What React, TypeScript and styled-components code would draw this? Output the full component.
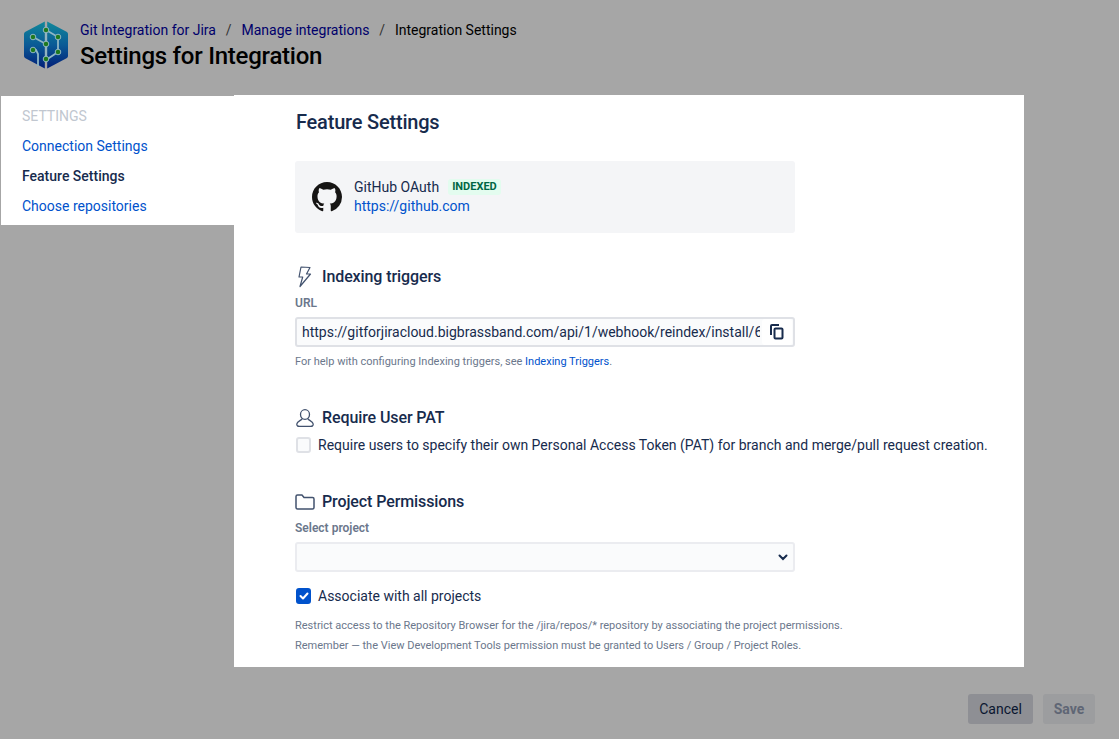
import React from "react";
import styled, { createGlobalStyle } from "styled-components";

const Global = createGlobalStyle`
  html, body { margin: 0; padding: 0; background: #a6a6a6; }
  body { font-family: Roboto, "Liberation Sans", sans-serif; font-size: 14px; color: #172b4d; }
  * { box-sizing: border-box; }
`;

const Page = styled.div`
  width: 1119px;
  height: 739px;
  overflow: hidden;
  display: flex;
  flex-direction: column;
  background: #a6a6a6;
`;
const Header = styled.header`
  height: 95px;
  display: flex;
  gap: 12px;
  padding: 20px 0 0 24px;
`;
const LogoWrap = styled.div`
  margin-top: 1px;
  width: 44px;
  height: 48px;
`;
const Titles = styled.div`
  display: flex;
  flex-direction: column;
`;
const Crumbs = styled.nav`
  display: flex;
  height: 20px;
  align-items: center;
  line-height: 20px;
  color: #000;
`;
const Crumb = styled.a<{ $current?: boolean }>`
  color: ${(p) => (p.$current ? "#000" : "#00006b")};
`;
const Sep = styled.span`
  width: 25.5px;
  text-align: center;
  color: #333;
`;
const PageTitle = styled.h1`
  margin: 0;
  font-size: 24px;
  line-height: 32px;
  font-weight: 500;
  letter-spacing: -0.24px;
  color: #000;
`;
const Body = styled.div`
  flex: 0 0 572px;
  display: flex;
  padding-left: 1px;
`;
const Sidebar = styled.aside`
  width: 233px;
  height: 129px;
  margin-top: 1px;
  background: #fff;
  padding: 5px 0 0 21px;
`;
const SideHeading = styled.div`
  height: 30px;
  line-height: 30px;
  color: #c1c7d0;
  font-size: 14px;
`;
const SideItem = styled.a<{ $active?: boolean }>`
  display: block;
  height: 30px;
  line-height: 30px;
  color: ${(p) => (p.$active ? "#172b4d" : "#0052cc")};
  font-weight: ${(p) => (p.$active ? 500 : 400)};
`;
const Main = styled.main`
  width: 790px;
  background: #fff;
  padding: 0 0 0 61px;
`;
const MainTitle = styled.h2`
  margin: 13px 0 0 1px;
  height: 28px;
  font-size: 20px;
  line-height: 28px;
  font-weight: 500;
  letter-spacing: -0.2px;
  color: #172b4d;
`;
const Card = styled.div`
  width: 500px;
  height: 72px;
  margin-top: 25px;
  background: #f4f5f7;
  border-radius: 3px;
  display: flex;
  align-items: center;
  gap: 12px;
  padding: 0 0 0 17px;
`;
const CardText = styled.div`
  display: flex;
  flex-direction: column;
  padding-bottom: 2px;
`;
const CardRow = styled.div`
  display: flex;
  align-items: center;
  gap: 9px;
  height: 20px;
  line-height: 20px;
`;
const Badge = styled.span`
  background: #e3fcef;
  color: #006644;
  font-size: 11px;
  font-weight: 700;
  line-height: 16px;
  height: 16px;
  padding: 0 4px;
  border-radius: 3px;
`;
const Link = styled.a`
  color: #0052cc;
  line-height: 20px;
  margin-top: -1px;
`;
const SectionHead = styled.div<{ $top: number }>`
  display: flex;
  align-items: center;
  margin-top: ${(p) => p.$top}px;
  height: 24px;
`;
const IconSlot = styled.span<{ $inset?: number }>`
  width: 27px;
  height: 24px;
  padding-left: ${(p) => p.$inset ?? 0}px;
  display: flex;
  align-items: center;
  flex: none;
`;
const SectionTitle = styled.h3`
  margin: 0;
  font-size: 16px;
  line-height: 24px;
  font-weight: 500;
  letter-spacing: -0.1px;
  color: #172b4d;
`;
const Label = styled.div`
  margin-top: 6px;
  height: 16px;
  font-size: 12px;
  line-height: 16px;
  font-weight: 600;
  color: #6b778c;
`;
const UrlField = styled.div`
  width: 500px;
  height: 30px;
  margin-top: 6px;
  background: #fafbfc;
  border: 2px solid #dfe1e6;
  border-radius: 3px;
  padding-left: 5px;
  line-height: 26px;
  color: #172b4d;
  display: flex;
  align-items: center;
`;
const UrlText = styled.span`
  width: 458px;
  overflow: hidden;
  white-space: nowrap;
`;
const CopyBtn = styled.span`
  margin-left: 2px;
  width: 30px;
  height: 26px;
  background: #fff;
  border-radius: 3px;
  display: flex;
  align-items: center;
  justify-content: center;
`;
const Help = styled.div<{ $top: number }>`
  margin-top: ${(p) => p.$top}px;
  font-size: 11px;
  line-height: 20px;
  height: 20px;
  color: #6b778c;
`;
const HelpLink = styled.a`
  color: #0052cc;
`;
const CheckRow = styled.label<{ $top: number }>`
  display: flex;
  align-items: center;
  gap: 7px;
  margin-top: ${(p) => p.$top}px;
  height: 20px;
  line-height: 20px;
  color: #172b4d;
  white-space: nowrap;
`;
const Box = styled.span<{ $on?: boolean }>`
  width: 15px;
  height: 16px;
  margin-left: 1px;
  flex: none;
  border-radius: 3px;
  background: ${(p) => (p.$on ? "#0052cc" : "#fafbfc")};
  border: 2px solid ${(p) => (p.$on ? "#0052cc" : "#dfe1e6")};
  display: flex;
  align-items: center;
  justify-content: center;
`;
const SelectBox = styled.div`
  width: 500px;
  height: 30px;
  margin-top: 6px;
  background: #fafbfc;
  border: 2px solid #ebecf0;
  border-radius: 3px;
  display: flex;
  align-items: center;
  justify-content: flex-end;
  padding-right: 2px;
`;
const Footer = styled.footer`
  flex: 1;
  display: flex;
  justify-content: flex-end;
  gap: 10px;
  padding: 27px 24px 0 0;
`;
const Button = styled.button<{ $disabled?: boolean }>`
  height: 30px;
  border: 0;
  border-radius: 3px;
  font-family: inherit;
  font-size: 14px;
  padding: 0;
  width: ${(p) => (p.$disabled ? 52 : 65)}px;
  background: ${(p) => (p.$disabled ? "#9c9d9f" : "#8e8f94")};
  color: ${(p) => (p.$disabled ? "#5f6675" : "#0a1630")};
  font-weight: ${(p) => (p.$disabled ? 700 : 400)};
`;

const Logo = () => (
  <svg width="44" height="48" viewBox="0 0 44 48">
    <defs>
      <linearGradient id="lg" x1="0" y1="0" x2="0" y2="1">
        <stop offset="0" stopColor="#10889a" />
        <stop offset="0.5" stopColor="#0a5a96" />
        <stop offset="1" stopColor="#021f78" />
      </linearGradient>
    </defs>
    <path d="M20.8 0.5 L1 11 Q0 12 0 13 V35 Q0 36 1 37 L20.8 47.5 Z" fill="url(#lg)" />
    <path d="M23.2 0.5 L43 11 Q44 12 44 13 V35 Q44 36 43 37 L23.2 47.5 Z" fill="url(#lg)" />
    <g stroke="#8fb6c4" strokeWidth="1.8" fill="none">
      <path d="M22 8 V40" />
      <path d="M22 9 L34 16 V31 L22 39" />
      <path d="M9 16 L22 23" />
      <path d="M9 29 H12 L14 33 V45" />
    </g>
    <g fill="#1f7a1f" stroke="#8fb6c4" strokeWidth="1">
      <circle cx="22" cy="9" r="2.8" />
      <circle cx="9" cy="16" r="2.8" />
      <circle cx="34" cy="16" r="2.8" />
      <circle cx="22" cy="23" r="2.8" />
      <circle cx="9" cy="29" r="2.8" />
      <circle cx="34" cy="31" r="2.8" />
      <circle cx="22" cy="38" r="2.8" />
    </g>
  </svg>
);

const GitHub = () => (
  <svg width="30" height="30" viewBox="0 0 16 16" fill="#161514">
    <path d="M8 0C3.58 0 0 3.58 0 8c0 3.54 2.29 6.53 5.47 7.59.4.07.55-.17.55-.38 0-.19-.01-.82-.01-1.49-2.01.37-2.53-.49-2.69-.94-.09-.23-.48-.94-.82-1.13-.28-.15-.68-.52-.01-.53.63-.01 1.08.58 1.23.82.72 1.21 1.87.87 2.33.66.07-.52.28-.87.51-1.07-1.78-.2-3.64-.89-3.64-3.95 0-.87.31-1.59.82-2.15-.08-.2-.36-1.02.08-2.12 0 0 .67-.21 2.2.82.64-.18 1.32-.27 2-.27s1.36.09 2 .27c1.53-1.04 2.2-.82 2.2-.82.44 1.1.16 1.92.08 2.12.51.56.82 1.27.82 2.15 0 3.07-1.87 3.75-3.65 3.95.29.25.54.73.54 1.48 0 1.07-.01 1.93-.01 2.2 0 .21.15.46.55.38A8.01 8.01 0 0 0 16 8c0-4.42-3.58-8-8-8z" />
  </svg>
);

const Bolt = () => (
  <svg width="18" height="22" viewBox="0 0 18 22" fill="none" stroke="#42526e" strokeWidth="1.2" strokeLinejoin="round" strokeLinecap="round">
    <path d="M6 1 L15 1.5 L11.5 8 H15.5 L5 20.5 L7.7 11 H4 Z" />
  </svg>
);

const User = () => (
  <svg width="18" height="18" viewBox="0 0 18 18" fill="none" stroke="#42526e" strokeWidth="1.3">
    <ellipse cx="9" cy="5.5" rx="4.5" ry="4.8" />
    <path d="M6.2 9.5 C5.8 11.5 1 12 0.8 15 C0.7 16.8 2 17.4 3.5 17.4 H14.5 C16 17.4 17.3 16.8 17.2 15 C17 12 12.2 11.5 11.8 9.5" />
  </svg>
);

const Folder = () => (
  <svg width="20" height="16" viewBox="0 0 20 16" fill="none" stroke="#42526e" strokeWidth="1.5" strokeLinejoin="round">
    <path d="M1 2.5 Q1 1 2.5 1 H7 L9 3.5 H17.5 Q19 3.5 19 5 V13.5 Q19 15 17.5 15 H2.5 Q1 15 1 13.5 Z" />
  </svg>
);

const Copy = () => (
  <svg width="14" height="16" viewBox="0 0 14 16" fill="none" stroke="#172b4d" strokeWidth="2">
    <path d="M1 11 V2 Q1 1 2 1 H9" />
    <rect x="4.5" y="4.5" width="8" height="10" rx="1" />
  </svg>
);

const Chevron = () => (
  <svg width="16" height="16" viewBox="0 0 16 16" fill="none" stroke="#172b4d" strokeWidth="2" strokeLinecap="round">
    <path d="M4.5 6.5 L8 10 L11.5 6.5" />
  </svg>
);

const Tick = () => (
  <svg width="10" height="8" viewBox="0 0 10 8" fill="none" stroke="#fff" strokeWidth="2" strokeLinecap="round" strokeLinejoin="round">
    <path d="M1.5 4 L4 6.5 L8.5 1.5" />
  </svg>
);

export default function App() {
  return (
    <Page>
      <Global />
      <Header>
        <LogoWrap><Logo /></LogoWrap>
        <Titles>
          <Crumbs>
            <Crumb>Git Integration for Jira</Crumb>
            <Sep>/</Sep>
            <Crumb>Manage integrations</Crumb>
            <Sep>/</Sep>
            <Crumb $current>Integration Settings</Crumb>
          </Crumbs>
          <PageTitle>Settings for Integration</PageTitle>
        </Titles>
      </Header>
      <Body>
        <Sidebar>
          <SideHeading>SETTINGS</SideHeading>
          <SideItem>Connection Settings</SideItem>
          <SideItem $active>Feature Settings</SideItem>
          <SideItem>Choose repositories</SideItem>
        </Sidebar>
        <Main>
          <MainTitle>Feature Settings</MainTitle>
          <Card>
            <GitHub />
            <CardText>
              <CardRow>
                GitHub OAuth <Badge>INDEXED</Badge>
              </CardRow>
              <Link>https://github.com</Link>
            </CardText>
          </Card>
          <SectionHead $top={32}>
            <IconSlot><Bolt /></IconSlot>
            <SectionTitle>Indexing triggers</SectionTitle>
          </SectionHead>
          <Label>URL</Label>
          <UrlField>
            <UrlText>https://gitforjiracloud.bigbrassband.com/api/1/webhook/reindex/install/6</UrlText>
            <CopyBtn><Copy /></CopyBtn>
          </UrlField>
          <Help $top={5}>
            For help with configuring Indexing triggers, see <HelpLink>Indexing Triggers</HelpLink>.
          </Help>
          <SectionHead $top={34}>
            <IconSlot $inset={1}><User /></IconSlot>
            <SectionTitle>Require User PAT</SectionTitle>
          </SectionHead>
          <CheckRow $top={5}>
            <Box />
            Require users to specify their own Personal Access Token (PAT) for branch and merge/pull request creation.
          </CheckRow>
          <SectionHead $top={35}>
            <IconSlot><Folder /></IconSlot>
            <SectionTitle>Project Permissions</SectionTitle>
          </SectionHead>
          <Label>Select project</Label>
          <SelectBox><Chevron /></SelectBox>
          <CheckRow $top={14}>
            <Box $on><Tick /></Box>
            Associate with all projects
          </CheckRow>
          <Help $top={10}>Restrict access to the Repository Browser for the /jira/repos/* repository by associating the project permissions.</Help>
          <Help $top={0}>Remember — the View Development Tools permission must be granted to Users / Group / Project Roles.</Help>
        </Main>
      </Body>
      <Footer>
        <Button>Cancel</Button>
        <Button $disabled>Save</Button>
      </Footer>
    </Page>
  );
}
